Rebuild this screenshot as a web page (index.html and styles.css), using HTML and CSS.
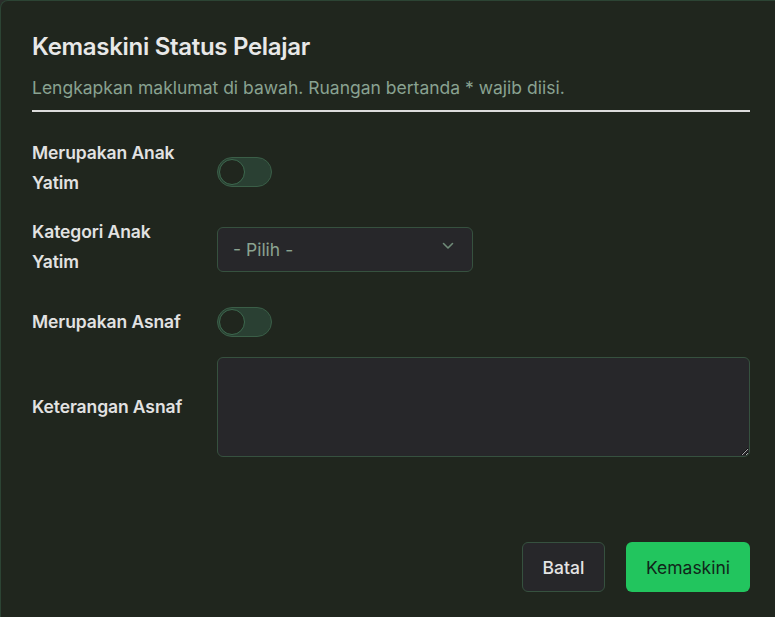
FILE: index.html
```html
<!DOCTYPE html>
<html lang="ms">
<head>
<meta charset="utf-8">
<title>Kemaskini Status Pelajar</title>
<link rel="stylesheet" href="styles.css">
</head>
<body>
<div class="dialog">
  <header class="dialog-header">
    <h1 class="title">Kemaskini Status Pelajar</h1>
    <p class="subtitle">Lengkapkan maklumat di bawah. Ruangan bertanda * wajib diisi.</p>
  </header>
  <form class="form">
    <div class="row row-1">
      <label class="label">Merupakan Anak Yatim</label>
      <div class="control"><span class="toggle"><span class="knob"></span></span></div>
    </div>
    <div class="row row-2">
      <label class="label">Kategori Anak Yatim</label>
      <div class="control">
        <div class="select">
          <span>- Pilih -</span>
          <svg class="chev" width="12" height="8" viewBox="0 0 12 8"><path d="M1.5 1.5 L6 6 L10.5 1.5" fill="none" stroke="#6f8b78" stroke-width="1.6" stroke-linecap="round" stroke-linejoin="round"/></svg>
        </div>
      </div>
    </div>
    <div class="row row-3">
      <label class="label">Merupakan Asnaf</label>
      <div class="control"><span class="toggle"><span class="knob"></span></span></div>
    </div>
    <div class="row row-4">
      <label class="label">Keterangan Asnaf</label>
      <div class="control"><textarea class="textarea"></textarea></div>
    </div>
  </form>
  <footer class="footer">
    <button type="button" class="btn btn-cancel">Batal</button>
    <button type="button" class="btn btn-primary">Kemaskini</button>
  </footer>
</div>
</body>
</html>
```
FILE: styles.css
```css
html, body {
  margin: 0;
  padding: 0;
  height: 100%;
  overflow: hidden;
  background: #2a2d2a;
}
body {
  font-family: Inter, "Noto Sans", sans-serif;
}
.dialog {
  box-sizing: border-box;
  width: calc(100% + 10px);
  height: calc(100% + 10px);
  background: #20261e;
  border-top: 1px solid #2c4434;
  border-left: 1px solid #2c4434;
  border-top-left-radius: 8px;
  padding: 32px 35px 0 31px;
  display: flex;
  flex-direction: column;
}
.dialog-header {
  border-bottom: 2px solid #dcdcdc;
  padding-bottom: 10px;
}
.title {
  margin: 0;
  font-size: 24px;
  line-height: 28px;
  font-weight: 600;
  color: #e8e8e8;
  letter-spacing: -0.3px;
}
.subtitle {
  margin: 15px 0 0;
  font-size: 17.5px;
  line-height: 24px;
  color: #89a291;
}
.form {
  margin-top: 26px;
  display: flex;
  flex-direction: column;
}
.row {
  display: grid;
  grid-template-columns: 185px 1fr;
  align-items: center;
}
.row-2 { margin-top: 19px; }
.row-3 { margin-top: 30px; }
.row-4 { margin-top: 20px; }
.label {
  font-size: 17.5px;
  line-height: 30px;
  font-weight: 600;
  color: #e2e2e2;
  letter-spacing: -0.1px;
}
.row-1 .label, .row-2 .label { width: 160px; }
.control { display: flex; align-items: center; }
.toggle {
  box-sizing: border-box;
  width: 55px;
  height: 30px;
  border-radius: 15px;
  background: #2a4033;
  border: 1px solid #3a5e47;
  position: relative;
  display: inline-block;
}
.row-1 .toggle { margin-top: 8px; }
.knob {
  position: absolute;
  left: 1px;
  top: 1px;
  box-sizing: border-box;
  width: 26px;
  height: 26px;
  border-radius: 50%;
  background: #20261e;
  border: 1px solid #3d6a4f;
}
.select {
  box-sizing: border-box;
  width: 256px;
  height: 45px;
  margin-top: 4px;
  background: #27272a;
  border: 1px solid #36513f;
  border-radius: 6px;
  display: flex;
  align-items: center;
  justify-content: space-between;
  padding: 0 18px 0 15px;
  font-size: 17.5px;
  color: #8ba391;
}
.chev { margin-top: -6px; }
.textarea {
  box-sizing: border-box;
  width: 100%;
  height: 100px;
  background: #27272a;
  border: 1px solid #36513f;
  border-radius: 6px;
  resize: vertical;
  display: block;
  outline: none;
}
.footer {
  margin-top: 85px;
  display: flex;
  justify-content: flex-end;
  gap: 21px;
}
.btn {
  box-sizing: border-box;
  height: 50px;
  border-radius: 6px;
  font-family: Inter, "Noto Sans", sans-serif;
  font-size: 17.5px;
  font-weight: 500;
  cursor: pointer;
}
.btn-cancel {
  width: 83px;
  background: #27272a;
  border: 1px solid #36513f;
  color: #e4e4e4;
}
.btn-primary {
  width: 124px;
  background: #22c55e;
  border: none;
  color: #10261a;
  font-weight: 400;
}
```
